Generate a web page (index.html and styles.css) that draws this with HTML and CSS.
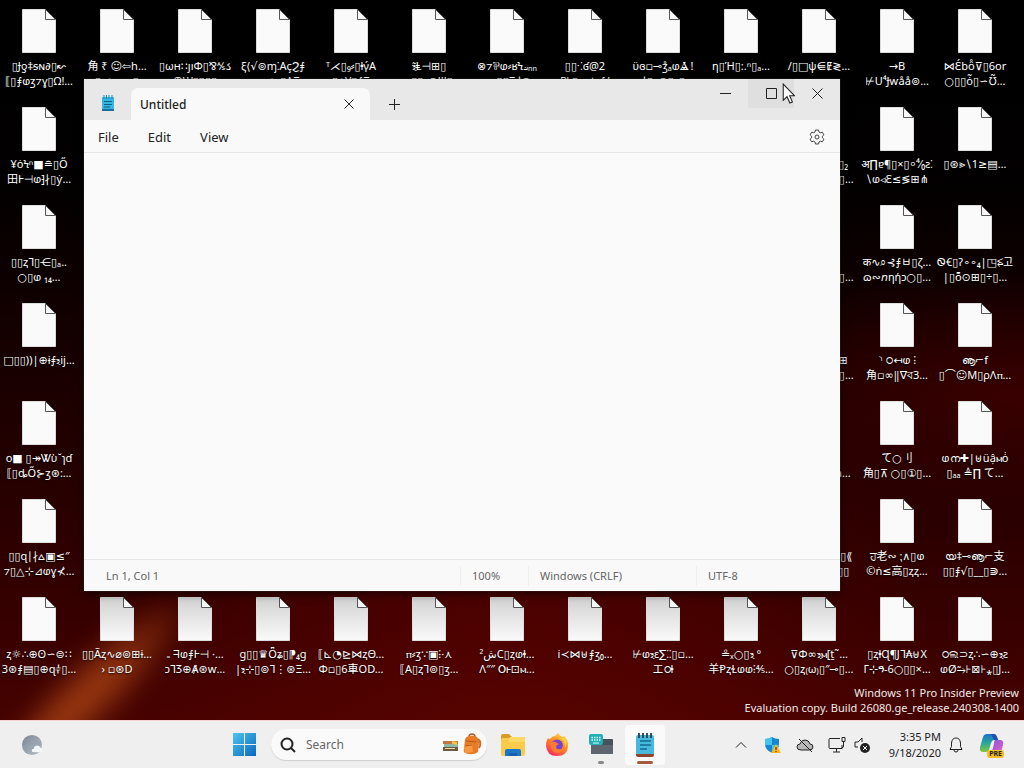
FILE: index.html
```html
<!DOCTYPE html>
<html lang="en">
<head>
<meta charset="utf-8">
<title>Desktop</title>
<link rel="stylesheet" href="styles.css">
</head>
<body>
<main class="desktop">
  <ul class="files" id="files"></ul>

  <section class="window" aria-label="Untitled - Notepad">
    <header class="titlebar">
      <svg class="app-icon" viewBox="0 0 16 18"><rect x="2" y="2" width="12" height="14" rx="1" fill="#35b5df"/><rect x="2" y="14" width="12" height="2" fill="#176f9c"/><path d="M4 0v4M6.500 0v4M9 0v4M12 0v4" stroke="#178bb5"/><path d="M4 6.500h8M4 9.500h8M4 12h6" stroke="#0a6288"/></svg>
      <div class="tab"><span>Untitled</span><button class="tab-close" aria-label="Close tab"><svg viewBox="0 0 10 10"><path d="M.5.5l9 9M9.500.5l-9 9"/></svg></button></div>
      <button class="new-tab" aria-label="New tab"><svg viewBox="0 0 11 11"><path d="M5.500 0v11M0 5.500h11"/></svg></button>
      <div class="caption">
        <button aria-label="Minimize"><svg viewBox="0 0 11 11"><path d="M0 5.500h11"/></svg></button>
        <button class="hover" aria-label="Maximize"><svg viewBox="0 0 11 11"><path d="M.5.5h10v10H.5z"/></svg></button>
        <button aria-label="Close"><svg viewBox="0 0 11 11"><path d="M.5.5l10 10M10.500.5l-10 10"/></svg></button>
      </div>
    </header>
    <nav class="menubar">
      <button>File</button><button>Edit</button><button>View</button>
      <button class="settings" aria-label="Settings"><svg viewBox="0 0 16 16"><path d="M6.500 1h3l.5 2 1.400.8 2-.6 1.500 2.600-1.500 1.400v1.600l1.500 1.400-1.500 2.600-2-.6-1.400.8-.5 2h-3L6 13l-1.400-.8-2 .6-1.500-2.600 1.500-1.400V7.200L1.100 5.800l1.500-2.600 2 .6L6 3z"/><circle cx="8" cy="8" r="2"/></svg></button>
    </nav>
    <textarea class="editor" aria-label="Text editor" spellcheck="false"></textarea>
    <footer class="status"><span class="pos">Ln 1, Col 1</span><span class="zoom">100%</span><span class="eol">Windows (CRLF)</span><span class="enc">UTF-8</span></footer>
  </section>

  <svg class="pointer" viewBox="0 0 12 20"><path d="M1 1v15.500l3.600-3.400 2.700 6 2.400-1.100-2.600-5.800h4.700z" fill="#fff" stroke="#222"/></svg>

  <p class="watermark">Windows 11 Pro Insider Preview<br>Evaluation copy. Build 26080.ge_release.240308-1400</p>
</main>

<footer class="taskbar">
  <button class="weather" aria-label="Weather"><svg viewBox="0 0 24 24"><defs><linearGradient id="moon" x2="1" y2="1"><stop stop-color="#778594"/><stop offset="1" stop-color="#bcc4cb"/></linearGradient></defs><circle cx="12" cy="12" r="11" fill="url(#moon)"/><path d="M22 9c-5-2-9 1-9 5l-2 3c0 3 2 5 5 4l4-3z" fill="#9aa5ae"/><path d="M14 20c-3 0-3-4 0-4 0-4 6-5 7-1 3 0 3 5 0 5z" fill="#f5f7f8"/></svg></button>
  <div class="pinned">
    <button class="start" aria-label="Start"><svg viewBox="0 0 24 24"><defs><linearGradient id="win" x2="1" y2="1"><stop stop-color="#4fc3ef"/><stop offset="1" stop-color="#0868bd"/></linearGradient></defs><path d="M0 0h11.500v11.500H0zM12.500 0H24v11.500H12.500zM0 12.500h11.500V24H0zM12.500 12.500H24V24H12.500z" fill="url(#win)"/></svg></button>
    <label class="search"><svg class="lens" viewBox="0 0 16 16"><circle cx="7" cy="7" r="5.500"/><path d="M11 11l4 4"/></svg><input type="text" placeholder="Search" aria-label="Search"><svg class="art" viewBox="0 0 40 24"><path d="M1 8h15v3H1z" fill="#c47841"/><path d="M2 11h14v3H2z" fill="#8eb6a4"/><path d="M1 14h15v4H1z" fill="#6f5940"/><path d="M10 8l5 1v3l-5-1z" fill="#f1c64a"/><path d="M3 15.500h10" stroke="#ead7a3"/><path d="M27 4c0-4 6-4 6 0" fill="none" stroke="#a85a24" stroke-width="1.500"/><path d="M23 7q0-3 4-4 5-1 8 1 2 2 2 6l-1 9q-5 4-13 1-2-1-1-5z" fill="#e87b26"/><path d="M22 13l8-2 1 8-8 1z" fill="#f59a43"/><path d="M24 8l10 1M23 13l7-1" stroke="#b8581b" fill="none"/><path d="M36 6q4 3 1 9" stroke="#c96f2b" stroke-width="2" fill="none"/></svg></label>
    <button class="task" aria-label="File Explorer"><svg viewBox="0 0 26 26"><path d="M1 4q0-2 2-2h6l3 3h11q2 0 2 2v3H1z" fill="#d99a26"/><rect x="1" y="6" width="24" height="18" rx="2" fill="#fbcc4b"/><path d="M10 5h13q2 0 2 2v3H8z" fill="#ffd966"/><path d="M5 24v-5q0-2 2-2h12q2 0 2 2v5z" fill="#1976c9"/><path d="M9 24v-3h8v3" fill="#1560a8"/></svg></button>
    <button class="task" aria-label="Firefox"><svg viewBox="0 0 26 26"><defs><linearGradient id="fox" x1=".8" y1="0" x2=".2" y2="1"><stop stop-color="#ffe14a"/><stop offset=".45" stop-color="#ff8a20"/><stop offset="1" stop-color="#f5236d"/></linearGradient></defs><path d="M4 6q1 1 2 1 2-3 5-3l3-3q2 3 5 4l1-1q5 5 4 11-1 9-11 9-10 0-11-10 0-5 2-8z" fill="url(#fox)"/><circle cx="13" cy="13.500" r="6" fill="#7841d6"/><path d="M6 11q4-3 7 0l2 1q-3 1-3 3 0 3 5 2 2-1 2-4 3 7-4 8-8 1-9-10z" fill="#ff7b2d"/><path d="M14 6q8 0 7 10 3-5-1-10z" fill="#ffd43c"/></svg></button>
    <button class="task open" aria-label="On-Screen Keyboard"><svg viewBox="0 0 26 26"><path d="M3 9h9l2-2h10q1 0 1 1v13q0 1-1 1H4q-1 0-1-1z" fill="#48525b"/><path d="M3 13h22v8q0 1-1 1H4q-1 0-1-1z" fill="#5d666f"/><rect x="1" y="2" width="14" height="11" rx="2" fill="#22aeb7"/><path d="M3.500 5.500h9M3.500 8h9" stroke="#d7ffff" stroke-width="1.500" stroke-dasharray="1.500 1"/><path d="M5 11h6" stroke="#d7ffff"/></svg></button>
    <button class="task active" aria-label="Notepad"><svg viewBox="0 0 26 26"><rect x="4" y="3" width="18" height="20" rx="2" fill="#48b9dc"/><path d="M7 1v5M11 1v5M15 1v5M19 1v5" stroke="#27414d" stroke-width="1.800"/><path d="M8 9h11M8 13h11M8 17h7" stroke="#116a8c" stroke-width="1.500"/><path d="M4 22h18v1q0 2-2 2H6q-2 0-2-2z" fill="#8c452a"/></svg></button>
  </div>
  <div class="tray">
    <button class="chevron" aria-label="Show hidden icons"><svg viewBox="0 0 18 18"><path d="M4 11.500l5-5 5 5"/></svg></button>
    <button class="tray-icon" aria-label="Windows Security"><svg viewBox="0 0 18 18"><path d="M8 1q3 2 7 2v5q0 6-7 9-7-3-7-9V3q4 0 7-2z" fill="#1687cf" stroke="none"/><path d="M8 1v8H1V3q4 0 7-2zM8 9h7q-1 6-7 8z" fill="#45c3ec" stroke="none"/><path d="M12 8l5 9H7z" fill="#ffb51b" stroke="none"/><path d="M12 11v3M12 15v1" stroke="#222"/></svg></button>
    <button class="tray-icon" aria-label="OneDrive"><svg viewBox="0 0 18 18"><path d="M5 14q-4 0-4-3 0-3 3-3 1-4 5-4t5 4q3 0 3 3t-4 3z" fill="#b7b7b7"/><path d="M3 3l13 13"/></svg></button>
    <button class="net" aria-label="Network"><svg viewBox="0 0 18 18"><path d="M12 2.500H2q-1 0-1 1v8q0 1 1 1h12V9M5 16h7M8.500 13v3M14 1.500h3v4h-3zM15.500 6v4q0 2-2 2"/></svg></button>
    <button class="sound" aria-label="Volume muted"><svg viewBox="0 0 18 18"><path d="M9 6V2L5 6H2v5h3"/><circle cx="12" cy="12" r="5" fill="#222" stroke="none"/><path d="M10 10l4 4M14 10l-4 4" stroke="#fff"/></svg></button>
    <button class="clock">3:35 PM<br>9/18/2020</button>
    <button class="bell" aria-label="Notifications"><svg viewBox="0 0 18 18"><path d="M3 13.500h12l-1.500-3V7Q13 2 9 2T4.500 7v3.500zM7 14q0 2 2 2t2-2"/></svg></button>
    <button class="copilot" aria-label="Copilot preview"><svg viewBox="0 0 26 26"><defs><linearGradient id="cop" x2="0" y2="1"><stop stop-color="#1c73c8"/><stop offset=".5" stop-color="#28a69b"/><stop offset="1" stop-color="#86c63d"/></linearGradient><linearGradient id="pil" x2="1" y2="1"><stop stop-color="#7758d9"/><stop offset=".6" stop-color="#c15bd1"/><stop offset="1" stop-color="#fa716c"/></linearGradient></defs><path d="M8 2h7q2 0 3 3l1 3h-4q-2 0-3 3l-2 7q-1 2-3 2H4q-4 0-3-5l3-10q1-3 4-3z" fill="url(#cop)"/><path d="M12 2h3q2 0 3 3l1 3h-4z" fill="#234eb4"/><path d="M16 8h5q4 0 3 5l-2 7q-1 3-4 3H9q3 0 4-4l2-7q0-3 1-4z" fill="url(#pil)"/></svg><span>PRE</span></button>
  </div>
</footer>
<script src="script.js"></script>
</body>
</html>
```
FILE: styles.css
```css
* { box-sizing: border-box; }
html, body { height: 100%; margin: 0; }
body {
  display: flex; flex-direction: column; overflow: hidden;
  font-family: "Noto Sans", "DejaVu Sans", "Noto Sans CJK SC", sans-serif;
  font-size: 12px; color: #222;
}
button { font: inherit; color: inherit; border: 0; padding: 0; background: none; }
svg { display: block; }

.desktop {
  position: relative; flex: 1; min-height: 0; overflow: hidden;
  background:
    radial-gradient(ellipse at 99% 55%, rgba(65, 0, 0, .8), transparent 22%),
    radial-gradient(ellipse at 50% 110%, rgba(95, 3, 0, .7), transparent 60%),
    linear-gradient(#000 0, #020000 25%, #160000 48%, #290000 70%, #390000 88%, #450200);
}
/* Diagonal streak of light in the wallpaper's lower left corner */
.desktop::before {
  content: ""; position: absolute; left: -20px; bottom: 10px; width: 230px; height: 44px;
  border-radius: 50%; transform: rotate(-44deg); filter: blur(14px);
  background: linear-gradient(90deg, #9c3a12, #93340f 60%, #5c1505);
}
.files {
  position: relative;
  display: grid; grid-template-columns: repeat(auto-fill, 78px); grid-auto-rows: 98px;
  margin: 0; padding: 0; list-style: none;
}
.file { display: flex; flex-direction: column; align-items: center; gap: 5px; padding-top: 9px; }
.file svg { width: 34px; height: 44px; flex: none; }
.file p {
  margin: 0; text-align: center; white-space: nowrap; color: #fff;
  font-size: 11px; line-height: 15px; text-shadow: 0 1px 2px #000;
}
.file span { display: block; height: 15px; }

.window {
  position: absolute; left: 84px; right: 184px; top: 79px; bottom: 129px;
  display: flex; flex-direction: column; background: #f9f9f9;
  box-shadow: 0 0 1px #555, 0 3px 8px rgba(0, 0, 0, .6);
}
.titlebar { display: flex; height: 41px; background: #e8e8e8; }
.app-icon { width: 16px; height: 18px; margin: 16px 15px 0 16px; }
.tab {
  display: flex; align-items: center; justify-content: space-between;
  width: 239px; height: 32px; margin-top: 9px; padding: 0 16px 0 9px;
  border-radius: 7px 7px 0 0; background: #f9f9f9; font-weight: 500;
}
.tab-close svg { width: 10px; height: 10px; }
.new-tab { width: 49px; padding-left: 19px; padding-top: 10px; }
.new-tab svg { width: 11px; height: 11px; }
.titlebar button svg { fill: none; stroke: #222; }
.caption { display: flex; margin-left: auto; }
.caption button { display: flex; align-items: center; justify-content: center; width: 46px; height: 29px; }
.caption svg { width: 11px; height: 11px; }
.caption .hover { background: #dfdfdf; }
.menubar {
  display: flex; align-items: center; gap: 29px; height: 33px; padding: 1px 15px 0 14px;
  border-bottom: 1px solid #e6e6e6; font-size: 13px; line-height: 18px;
}
.settings { margin-left: auto; }
.settings svg { width: 16px; height: 16px; fill: none; stroke: #444; }
.editor { flex: 1; border: 0; padding: 8px 12px; resize: none; outline: 0; background: #fafafa; font: 14px "Liberation Mono", monospace; }
.status {
  display: flex; align-items: center; height: 32px; border-top: 1px solid #e6e6e6;
  font-size: 11px; color: #666;
}
.status span { padding-left: 11px; border-left: 1px solid #eee; line-height: 20px; }
.status .pos { flex: 1; padding-left: 22px; border: 0; }
.status .zoom { width: 68px; }
.status .eol { width: 168px; }
.status .enc { width: 144px; }

.pointer { position: absolute; left: 782px; top: 83px; width: 13px; height: 21px; }
.watermark {
  position: absolute; right: 5px; bottom: 5px; margin: 0;
  color: #f0eaea; font-size: 11px; line-height: 15px; text-align: right;
}

.taskbar {
  display: flex; align-items: center; height: 48px; flex: none;
  background: #f0eff0; border-top: 1px solid #f5d5d3;
}
.weather { width: 223px; padding-left: 21px; }
.weather svg { width: 22px; height: 22px; }
.pinned { display: flex; align-items: center; }
.start { width: 44px; padding-left: 10px; }
.start svg { width: 23px; height: 23px; }
.search {
  display: flex; align-items: center; gap: 10px; width: 216px; height: 31px;
  margin: 0 4px; padding: 0 5px 0 9px; border-radius: 16px; background: #fafafa;
  box-shadow: 0 1px 1px #d0d0d0;
}
.search input { flex: 1; min-width: 0; border: 0; padding: 0; background: none; outline: 0; font: 12px "Noto Sans", sans-serif; }
.search input::placeholder { color: #666; opacity: 1; }
.lens { width: 16px; height: 16px; fill: none; stroke: #222; stroke-width: 2; }
.art { width: 40px; height: 24px; }
.task {
  position: relative; display: flex; align-items: center; justify-content: center;
  width: 40px; height: 40px; margin: 0 2px; border-radius: 4px;
}
.task svg { width: 26px; height: 26px; }
.task.active { background: #fafafa; }
.task.open::after, .task.active::after {
  content: ""; position: absolute; bottom: 1px; width: 6px; height: 3px; border-radius: 2px; background: #888;
}
.task.active::after { width: 16px; background: #a35b3d; }
.tray { display: flex; align-items: center; margin-left: auto; padding-right: 19px; }
.tray svg { width: 18px; height: 18px; fill: none; stroke: #222; }
.chevron, .tray-icon { margin-right: 14px; }
.net { margin-right: 7px; }
.clock { width: 70px; text-align: right; font-size: 11px; line-height: 16px; }
.bell { margin: 0 14px 0 6px; }
.copilot { position: relative; }
.tray .copilot svg { width: 26px; height: 26px; stroke: none; }
.copilot span {
  position: absolute; right: 1px; bottom: 0; padding: 0 2px; border-radius: 3px;
  background: #f5bd25; font-size: 7px; line-height: 8px; font-weight: 700;
}
```
FILE: script.js
```js
const COLUMNS = 13;
const files = {
  0: [
    ["▯Ɉƍ‡ᵴɴ∂▯↜", "⟦▯⨎ⱷʒ⁊ɣ▯Ω!…"], ["角 ₹ ☺⇦h…", "▯ ⸙▫ ᵢ ▸▯"], ["▯ωʜ∷ȷıΦ▯⅋⅍ડ", "ⴲѠ▯▯▯▯"],
    ["ξ⟨√⊚ɱ⁚ΑҫϨ⨎", "ⱷƞɣ⸙ʒ▯ΛΞ"], ["ᵀ⋌▯₉⸗▯ⱡγ́Α", "▯∴Ɣ▯⨎Ξ"], ["ⲝ̃Ⱡ⊣⊞▯", "ⲡ▯▯ⱬ⊕Ѱ▯"],
    ["⊗⁊⅌ⱷ⸗ʁϞ⟓ₙₙ", "ⱷʒ▯▯Ξ⫩⊕"], ["▯▯⁖ʛ@2", "₪ ▯ⱬ▫∟⨎/"], ["ϋɞ▫⊸ʒ̊ₐⱷⰡ !", "⫩▯ʒ⊚▯ⱬ▯"],
    ["η▯Ή▯:.ⁿ▯ₐ…"], ["/▯□ψ⋹Ɇ≷…"], ["→B", "⊬U⁴Ɉⱳåå⊚…"], ["⋈Ɛ́bö̊⊽▯6or", "○▯▯ȯ̃▯∽℧̃…"]
  ],
  1: { 0: ["¥ȯϞⁿ■≘▯Ő", "⽥Ⱶ⊣ⱷ⁆∤▯ƴ̇…"], 10: ["▯▯▯▯▯▯▯▯▯₂", "▯▯▯▯▯▯▯▯▯▯…"], 11: ["अ∏ɐ¶▯×▯⸰⁴⁄₀ƨ⁚", "∖ⱷ◃Ɛ≤≶⊞⋔"], 12: ["▯⊛⪢∖1≥▤…"] },
  2: { 0: ["▯▯ⱬ⅂▯⋲▯ₐ..", "○▯ⱷ ₁₄…"], 10: ["", "▯▯▯▯▯▯▯▯▯▯…"], 11: ["क∿⌕⊰⨎ㅂ▯ζ…", "ɷ∾𝘯ηήↄ○▯…"], 12: ["Ꮻ€▯ʔ∘∘₄|◳⥶고", "|▯ȭ⊙⊞▯÷▯…"] },
  3: { 0: ["□▯▯))|⊕ɨ⨎ⲝij…"], 10: ["▯▯▯▯▯▯▯▯⊞", "▯▯▯▯▯▯▯▯▯▯…"], 11: ["⸃ ੦↤ⱷ ⁝", "角▫∞‖∇ব3…"], 12: ["ൡ⌐f", "▯⌒☺M▯ρΛⲡ…"] },
  4: { 0: ["o■ ▯↠Ꮤὺ˘ɿɗ", "⟦▯ȡŐ⊱ʒ⊛:…"], 10: ["", "▯▯▯▯▯▯▯▯ạ…"], 11: ["て○刂", "角▯⊼ ○▯①▯…"], 12: ["ⱷന✚|⊎üậⲙȯ̇", "▯ₐₐ ≜∏ て…"] },
  5: { 0: ["▯▯ɋ∣∤⩟▣≤″", "⁊▯△⊹⊿ⱷɣ⊀…"], 10: ["▯▯▯▯▯▯▯▯▯▯⟪", "▯▯▯▯▯▯▯▯▯▯"], 11: ["ਹ老∾ ⁏∧▯ⱷ", "©ṅ≤高▯ⱬⱬ…"], 12: ["യ‡⊸ൡ⌐支", "▯▯⨎√▯__▯⋑…"] },
  6: [
    ["ⱬ☼∴⊕ʘ∽⊜∷", "3⊛⨎▤▯⊕ɋ⫩▯…"], ["▯▯Ãⱬ∿⌀⊚⊞ɨ…", "› ▫⊛D"], ["₌ ᖷⱷ⨎Ⱶ⊣ ·…", "ↄ⅂Ʒ⊕Ⱥ⊛ⱳ…"],
    ["ɡ▯▯♛Ȫʑ▯⁋₄ɡ", "|ⲝ⊹▯⊚⅂⋮⊛Ξ…"], ["⟦⊾◔⊵⋈ⱬΘ…", "Φ▫▯6車OD…"], ["ⲡ⸗ʒ∵▣⁝·⋏", "⟦A▯ⱬ⅂⊚▯ʒ…"],
    ["²شC▯ⱬⱷⱡ…", "Λ″″ Ⲟⱶ⊡ⲙ…"], ["i̇≺⋈⊎⨎ʒ₀…"], ["⊬ⱷⲝε∑⁚⁚▯▫…", "エଠⱡ"],
    ["≗ₓ○▯ⲝ °", "羊ⱣⱬⱢⱷⱷ⁝⅘…"], ["⊽Φ∞ⲝⲙ[ṯ˜…", "○▯ⱬ₍ω₎▯″⊸▯…"], ["▯ⱬⱡɊ¶J⅂₳⊎X", "Γ⊹ዓ-6○▯▯×…"], ["੦ଲ⊃ⱬ∴∽⊕ⲝƨ", "ⱷØ⥲⊦⊠⊦⁎▯J…"]
  ]
};

const page = (lit) => `<svg viewBox="0 0 34 44" aria-hidden="true">
  <defs><linearGradient id="g${lit ? 1 : 0}" x2="0" y2="1"><stop stop-color="${lit ? "#fafafa" : "#d2d2d2"}"/><stop offset="1" stop-color="#fafafa"/></linearGradient></defs>
  <path d="M.5.5h23l10 10v33H.5z" fill="url(#g${lit ? 1 : 0})" stroke="#ddd"/><path d="M23.500.5v10h10z" fill="#f8f8f8" stroke="#555"/></svg>`;

const list = document.getElementById("files");
for (let row = 0; row < 7; row++) {
  for (let col = 0; col < COLUMNS; col++) {
    const item = document.createElement("li");
    const label = files[row][col];
    if (label) {
      item.className = "file";
      const lit = row < 6 || col === 0 || col > 10;
      item.innerHTML = page(lit);
      const text = document.createElement("p");
      for (const line of label) {
        const span = document.createElement("span");
        span.textContent = line;
        text.append(span);
      }
      item.append(text);
    }
    list.append(item);
  }
}
```
